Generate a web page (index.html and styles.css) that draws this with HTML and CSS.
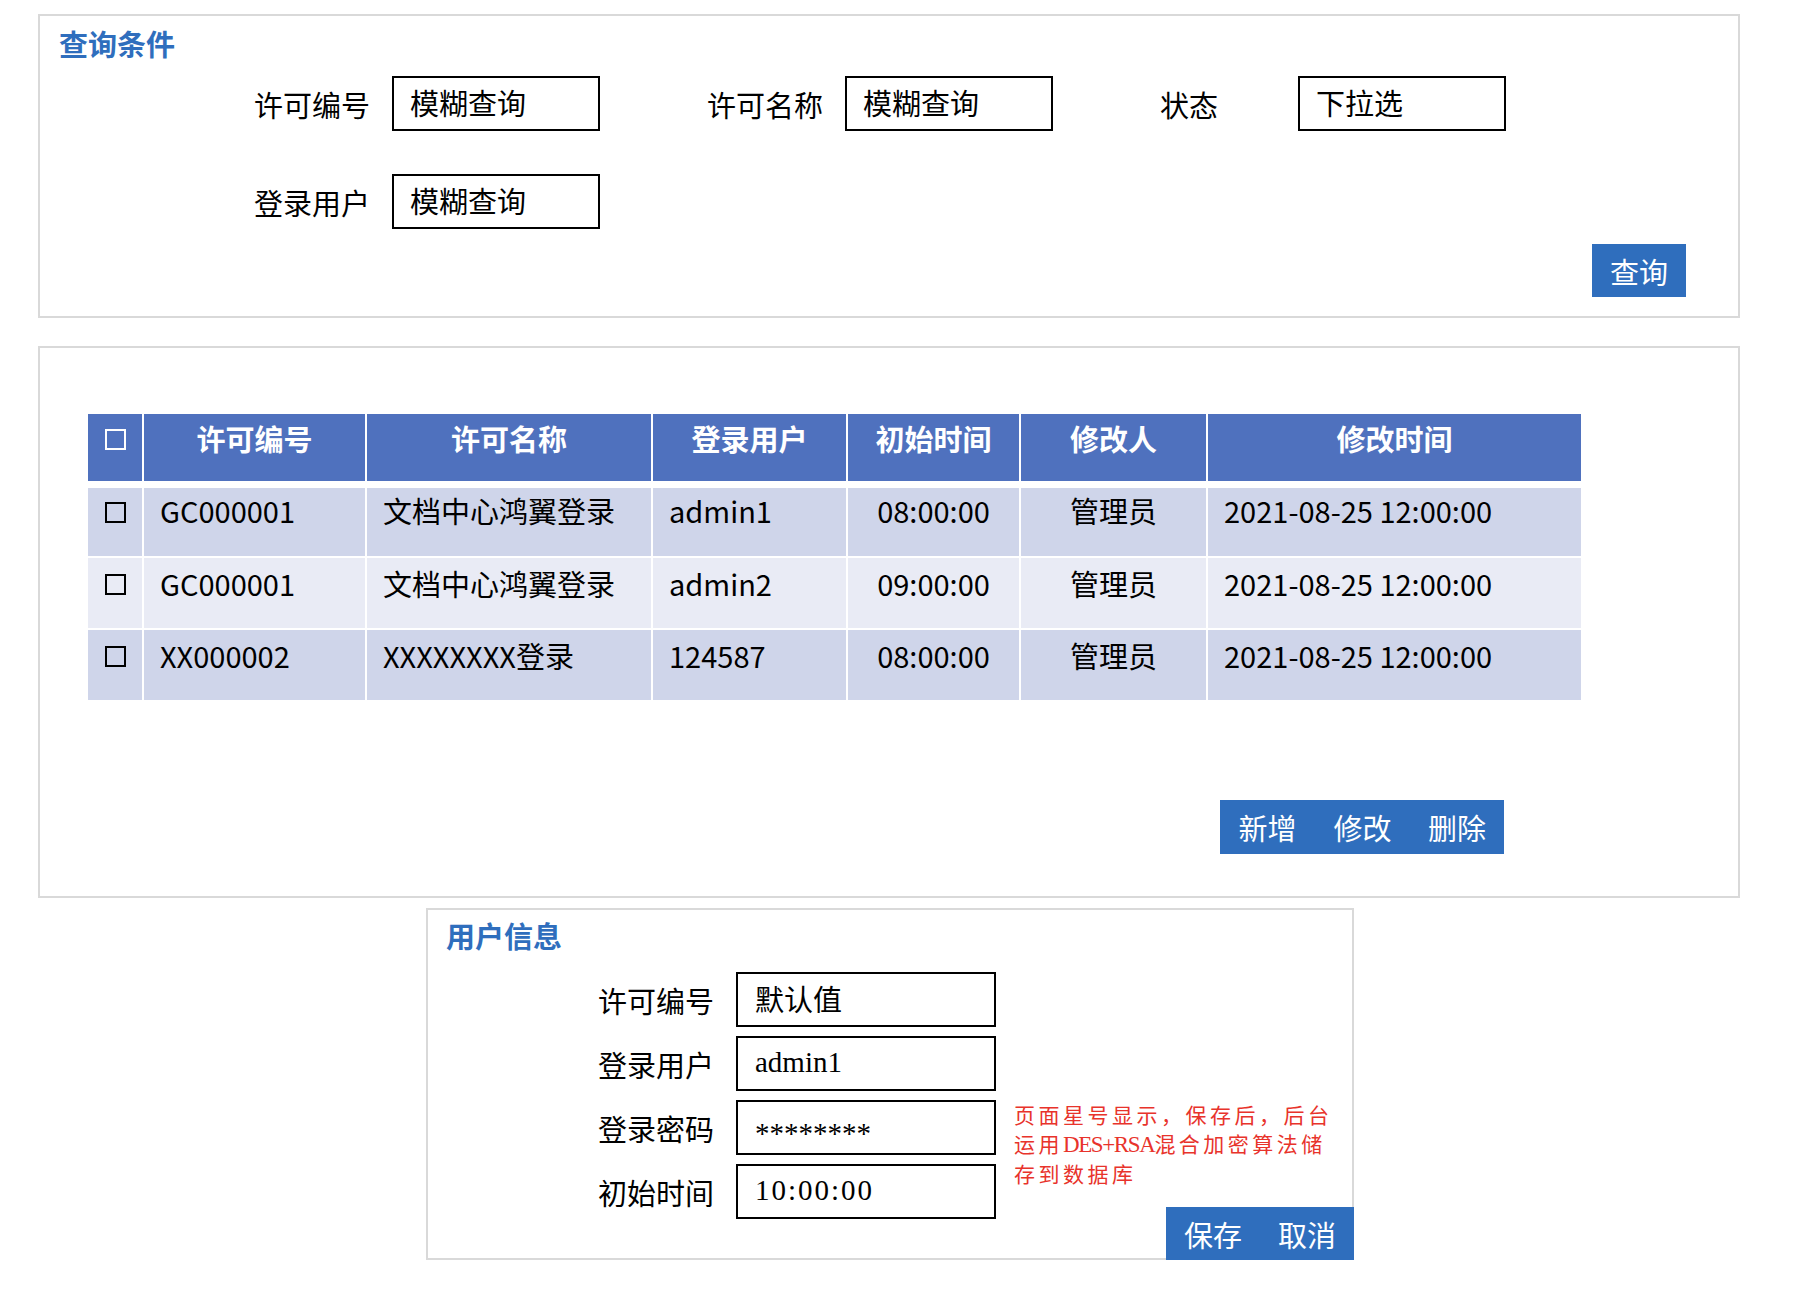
FILE: index.html
```html
<!DOCTYPE html>
<html lang="zh-CN">
<head>
<meta charset="utf-8">
<title>许可管理</title>
<link rel="stylesheet" href="styles.css">
</head>
<body>
<div class="page">
  <section class="panel panel-query">
    <h2 class="panel-title">查询条件</h2>
    <div class="query-grid">
      <div class="field"><span class="label">许可编号</span><div class="input">模糊查询</div></div>
      <div class="field"><span class="label">许可名称</span><div class="input">模糊查询</div></div>
      <div class="field"><span class="label">状态</span><div class="input">下拉选</div></div>
      <div class="field"><span class="label">登录用户</span><div class="input">模糊查询</div></div>
    </div>
    <div class="query-actions">
      <button class="btn">查询</button>
    </div>
  </section>

  <section class="panel panel-list">
    <div class="table">
      <div class="tr th">
        <div class="td td-cb"><span class="cb"></span></div>
        <div class="td">许可编号</div>
        <div class="td">许可名称</div>
        <div class="td">登录用户</div>
        <div class="td">初始时间</div>
        <div class="td">修改人</div>
        <div class="td">修改时间</div>
      </div>
      <div class="tr odd r1">
        <div class="td td-cb"><span class="cb"></span></div>
        <div class="td left">GC000001</div>
        <div class="td left">文档中心鸿翼登录</div>
        <div class="td left">admin1</div>
        <div class="td">08:00:00</div>
        <div class="td">管理员</div>
        <div class="td left">2021-08-25 12:00:00</div>
      </div>
      <div class="tr even">
        <div class="td td-cb"><span class="cb"></span></div>
        <div class="td left">GC000001</div>
        <div class="td left">文档中心鸿翼登录</div>
        <div class="td left">admin2</div>
        <div class="td">09:00:00</div>
        <div class="td">管理员</div>
        <div class="td left">2021-08-25 12:00:00</div>
      </div>
      <div class="tr odd">
        <div class="td td-cb"><span class="cb"></span></div>
        <div class="td left">XX000002</div>
        <div class="td left">XXXXXXXX登录</div>
        <div class="td left">124587</div>
        <div class="td">08:00:00</div>
        <div class="td">管理员</div>
        <div class="td left">2021-08-25 12:00:00</div>
      </div>
    </div>
    <div class="list-actions">
      <div class="btn-group">
        <button class="btn">新增</button>
        <button class="btn">修改</button>
        <button class="btn">删除</button>
      </div>
    </div>
  </section>

  <section class="panel panel-user">
    <h2 class="panel-title">用户信息</h2>
    <div class="user-grid">
      <span class="label row1">许可编号</span>
      <div class="input input-wide row1">默认值</div>
      <span class="label row2">登录用户</span>
      <div class="input input-wide latin row2">admin1</div>
      <span class="label row3">登录密码</span>
      <div class="input input-wide latin pwd row3">********</div>
      <span class="label row4">初始时间</span>
      <div class="input input-wide latin time row4">10:00:00</div>
      <p class="note">页面星号显示，保存后，后台<br>运用<span class="note-latin">DES+RSA</span>混合加密算法储<br>存到数据库</p>
    </div>
    <div class="user-actions">
      <button class="btn btn-save">保存</button>
      <button class="btn btn-cancel">取消</button>
    </div>
  </section>
</div>
</body>
</html>
```

FILE: styles.css
```css
* { box-sizing: border-box; }

html, body {
  margin: 0;
  padding: 0;
  background: #ffffff;
}

body {
  font-family: "Noto Sans CJK SC", "Noto Sans", sans-serif;
  color: #000000;
  font-size: 29px;
}

.page {
  padding-top: 14px;
}

.panel {
  border: 2px solid #d9d9d9;
  background: #ffffff;
}

.panel-title {
  margin: 0;
  font-size: 29px;
  line-height: 36px;
  font-weight: 700;
  color: #2f6ebd;
}

/* ---------- query panel ---------- */
.panel-query {
  margin-left: 38px;
  width: 1702px;
  padding: 9px 52px 19px 19px;
}

.query-grid {
  margin: 15px 0 0 195px;
  display: grid;
  grid-template-columns: repeat(3, 346px);
  grid-auto-rows: 55px;
  column-gap: 107px;
  row-gap: 43px;
}

.field {
  display: flex;
  align-items: center;
  gap: 22px;
}

.field .label { width: 116px; }
.field .input { width: 208px; }

.label {
  font-size: 29px;
  line-height: 36px;
  white-space: nowrap;
}

.input {
  height: 55px;
  border: 2px solid #000000;
  padding-left: 16px;
  font-size: 29px;
  line-height: 49px;
  white-space: nowrap;
}

.query-actions {
  display: flex;
  justify-content: flex-end;
  margin-top: 15px;
}

.btn {
  border: none;
  margin: 0;
  background: #2f6ebd;
  color: #ffffff;
  font-family: "Noto Sans CJK SC", "Noto Sans", sans-serif;
  font-size: 29px;
  line-height: 36px;
  padding: 0;
  cursor: pointer;
}

.query-actions .btn {
  width: 94px;
  height: 53px;
}

/* ---------- list panel ---------- */
.panel-list {
  margin: 28px 0 0 38px;
  width: 1702px;
  padding: 66px 0 42px 48px;
}

.table {
  width: 1493px;
  display: flex;
  flex-direction: column;
  gap: 2px;
}

.tr {
  display: grid;
  grid-template-columns: 54px 221px 284px 193px 171px 185px 373px;
  column-gap: 2px;
  height: 70px;
}

.th {
  height: 67px;
  margin-bottom: 5px;
}

.r1 { height: 68px; }

.td {
  text-align: center;
  line-height: 36px;
  padding-top: 7px;
  white-space: nowrap;
}

.th .td {
  background: #4f71be;
  color: #ffffff;
  font-weight: 700;
  padding-top: 6px;
}

.r1 .td { padding-top: 4px; }

.td.left {
  text-align: left;
  padding-left: 16px;
}

.odd .td { background: #cfd5ea; }
.even .td { background: #e9ebf5; }

.td-cb {
  display: flex;
  justify-content: center;
}

.tr .td-cb { padding-top: 16px; }
.th .td-cb { padding-top: 15px; }
.r1 .td-cb { padding-top: 14px; }

.cb {
  display: block;
  width: 21px;
  height: 21px;
  border: 2px solid currentColor;
}

.list-actions {
  display: flex;
  justify-content: flex-end;
  margin-top: 100px;
  padding-right: 234px;
}

.btn-group {
  display: flex;
  background: #2f6ebd;
  height: 54px;
}

.btn-group .btn {
  width: 95px;
  height: 54px;
}

.btn-group .btn:last-child { width: 94px; }

/* ---------- user panel ---------- */
.panel-user {
  position: relative;
  margin: 10px 0 0 426px;
  width: 928px;
  padding: 7px 0 39px 18px;
}

.user-grid {
  margin: 19px 0 0 152px;
  display: grid;
  grid-template-columns: 116px 260px 340px;
  grid-template-rows: repeat(4, 55px);
  column-gap: 22px;
  row-gap: 9px;
  align-items: center;
}

.user-grid .label { grid-column: 1; }
.user-grid .input { grid-column: 2; }
.user-grid .row1 { grid-row: 1; }
.user-grid .row2 { grid-row: 2; }
.user-grid .row3 { grid-row: 3; }
.user-grid .row4 { grid-row: 4; }

.input-wide {
  width: 260px;
  padding-left: 17px;
}

.latin {
  font-family: "Liberation Serif", "Times New Roman", serif;
  font-size: 29px;
}

.time { letter-spacing: 2px; }

.pwd {
  line-height: 62px;
}

.note {
  grid-column: 3;
  grid-row: 3 / span 2;
  align-self: start;
  margin: 0 0 0 -4px;
  font-size: 21px;
  line-height: 29px;
  letter-spacing: 3.5px;
  color: #e8332b;
  white-space: nowrap;
}

.note-latin {
  font-family: "Liberation Serif", "Times New Roman", serif;
  font-size: 23px;
  letter-spacing: -1.4px;
}

.user-actions {
  position: absolute;
  right: -2px;
  bottom: -2px;
  display: flex;
}

.user-actions .btn {
  width: 94px;
  height: 53px;
}

.btn-cancel { width: 95px; }
```
